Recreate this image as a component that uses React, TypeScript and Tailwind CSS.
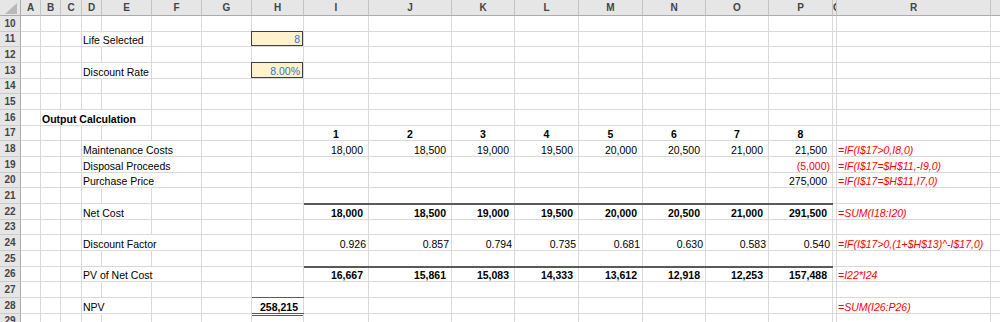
import React from 'react';

type Cell = { t: string; c: string; ov?: 'input' | 'thick' | 'npv' };
type Row = { n: number; h: string; cells?: Record<string, Cell>; hide?: string[] };

const COLS: { k: string; w: string; hc?: string }[] = [
  { k: 'A', w: 'w-[20px]' },
  { k: 'B', w: 'w-[20px]' },
  { k: 'C', w: 'w-[21px]' },
  { k: 'D', w: 'w-[20px]' },
  { k: 'E', w: 'w-[50px]' },
  { k: 'F', w: 'w-[50px]' },
  { k: 'G', w: 'w-[50px]' },
  { k: 'H', w: 'w-[52px]' },
  { k: 'I', w: 'w-[65px]' },
  { k: 'J', w: 'w-[83px]' },
  { k: 'K', w: 'w-[63px]' },
  { k: 'L', w: 'w-[64px]' },
  { k: 'M', w: 'w-[64px]' },
  { k: 'N', w: 'w-[63px]' },
  { k: 'O', w: 'w-[63px]' },
  { k: 'P', w: 'w-[64px]' },
  { k: 'Q', w: 'w-[4px]', hc: 'justify-start' },
  { k: 'R', w: 'w-[154px]' },
  { k: 'S', w: 'w-[64px]' },
];

const LB = 'justify-start pl-[1px]';
const NUM = 'justify-end pr-[5px]';
const NUMB = 'justify-end pr-[5px] font-bold';
const FAC = 'justify-end pr-[2px]';
const FX = 'justify-start pl-[1px] italic text-[#ff0000]';
const HD = 'justify-center font-bold';
const INP = 'justify-end pr-[2px] text-[#4472c4]';

const series = (vals: string[], c: string, ov?: Cell['ov']): Record<string, Cell> => {
  const keys = ['I', 'J', 'K', 'L', 'M', 'N', 'O', 'P'];
  const out: Record<string, Cell> = {};
  vals.forEach((v, i) => {
    if (v) out[keys[i]] = { t: v, c, ov };
  });
  return out;
};

const ROWS: Row[] = [
  { n: 10, h: 'h-[16px]' },
  {
    n: 11,
    h: 'h-[15px]',
    cells: { D: { t: 'Life Selected', c: LB }, H: { t: '8', c: INP, ov: 'input' } },
    hide: ['D'],
  },
  { n: 12, h: 'h-[16px]' },
  {
    n: 13,
    h: 'h-[16px]',
    cells: { D: { t: 'Discount Rate', c: LB }, H: { t: '8.00%', c: INP, ov: 'input' } },
    hide: ['D'],
  },
  { n: 14, h: 'h-[15px]' },
  { n: 15, h: 'h-[16px]' },
  {
    n: 16,
    h: 'h-[16px]',
    cells: { B: { t: 'Output Calculation', c: LB + ' font-bold' } },
    hide: ['B', 'C', 'D'],
  },
  { n: 17, h: 'h-[15px]', cells: series(['1', '2', '3', '4', '5', '6', '7', '8'], HD) },
  {
    n: 18,
    h: 'h-[16px]',
    cells: {
      D: { t: 'Maintenance Costs', c: LB },
      ...series(['18,000', '18,500', '19,000', '19,500', '20,000', '20,500', '21,000', '21,500'], NUM),
      R: { t: '=IF(I$17>0,I8,0)', c: FX },
    },
    hide: ['D', 'E'],
  },
  {
    n: 19,
    h: 'h-[16px]',
    cells: {
      D: { t: 'Disposal Proceeds', c: LB },
      P: { t: '(5,000)', c: 'justify-end pr-[2px] text-[#ff0000]' },
      R: { t: '=IF(I$17=$H$11,-I9,0)', c: FX },
    },
    hide: ['D', 'E'],
  },
  {
    n: 20,
    h: 'h-[15px]',
    cells: {
      D: { t: 'Purchase Price', c: LB },
      P: { t: '275,000', c: NUM },
      R: { t: '=IF(I$17=$H$11,I7,0)', c: FX },
    },
    hide: ['D', 'E'],
  },
  { n: 21, h: 'h-[16px]' },
  {
    n: 22,
    h: 'h-[16px]',
    cells: {
      D: { t: 'Net Cost', c: LB },
      ...series(['18,000', '18,500', '19,000', '19,500', '20,000', '20,500', '21,000', '291,500'], NUMB, 'thick'),
      R: { t: '=SUM(I18:I20)', c: FX },
    },
    hide: ['D'],
  },
  { n: 23, h: 'h-[15px]' },
  {
    n: 24,
    h: 'h-[16px]',
    cells: {
      D: { t: 'Discount Factor', c: LB },
      ...series(['0.926', '0.857', '0.794', '0.735', '0.681', '0.630', '0.583', '0.540'], FAC),
      R: { t: '=IF(I$17>0,(1+$H$13)^-I$17,0)', c: FX },
    },
    hide: ['D', 'E'],
  },
  { n: 25, h: 'h-[16px]' },
  {
    n: 26,
    h: 'h-[15px]',
    cells: {
      D: { t: 'PV of Net Cost', c: LB },
      ...series(['16,667', '15,861', '15,083', '14,333', '13,612', '12,918', '12,253', '157,488'], NUMB, 'thick'),
      R: { t: '=I22*I24', c: FX },
    },
    hide: ['D', 'E'],
  },
  { n: 27, h: 'h-[16px]' },
  {
    n: 28,
    h: 'h-[16px]',
    cells: {
      D: { t: 'NPV', c: LB },
      H: { t: '258,215', c: NUMB, ov: 'npv' },
      R: { t: '=SUM(I26:P26)', c: FX },
    },
    hide: ['D'],
  },
  { n: 29, h: 'h-[15px]' },
];

function DataCell({ col, row }: { col: { k: string; w: string }; row: Row }) {
  const cell = row.cells?.[col.k];
  const hidden = row.hide?.includes(col.k);
  return (
    <div
      className={`relative shrink-0 flex items-end whitespace-nowrap border-b border-r border-b-[#d9d9d9] ${
        hidden ? 'border-r-transparent' : 'border-r-[#d9d9d9]'
      } ${col.w} ${cell && cell.ov !== 'input' ? cell.c : ''}`}
    >
      {cell && cell.ov === 'input' ? (
        <div
          className={`absolute -left-px -top-px right-0 bottom-0 flex items-end border border-[#3f3f3f] bg-[#fff2cc] ${cell.c}`}
        >
          <span>{cell.t}</span>
        </div>
      ) : cell ? (
        <span>{cell.t}</span>
      ) : null}
      {cell && cell.ov === 'thick' ? (
        <div className="absolute left-0 -right-px -top-px h-[2px] bg-[#595959]" />
      ) : null}
      {cell && cell.ov === 'npv' ? (
        <>
          <div className="absolute left-0 -right-px -top-px h-px bg-[#595959]" />
          <div className="absolute left-0 -right-px -bottom-[3px] h-[3px] border-t-[3px] border-double border-t-[#595959]" />
        </>
      ) : null}
    </div>
  );
}

export default function App() {
  return (
    <div className="w-[1000px] h-[322px] overflow-hidden bg-white font-['Liberation_Sans',Arial,sans-serif] text-[10.5px] leading-[12px] text-black">
      {/* column header */}
      <div className="flex h-[16px]">
        <div className="relative shrink-0 w-[21px] h-[16px] bg-[#e6e6e6] border-r border-b border-r-[#ababab] border-b-[#ababab]">
          <svg className="absolute left-0 top-0" width="20" height="15" viewBox="0 0 20 15">
            <polygon points="5,14 17,14 17,3" fill="#b9b9b9" />
          </svg>
        </div>
        {COLS.map((c) => (
          <div
            key={c.k}
            className={`shrink-0 flex items-center overflow-hidden pt-[1px] bg-[#e6e6e6] border-r border-b border-r-[#c3c3c3] border-b-[#ababab] text-[#444444] font-bold text-[10px] ${
              c.hc ?? 'justify-center'
            } ${c.w}`}
          >
            {c.k}
          </div>
        ))}
      </div>
      {/* rows */}
      {ROWS.map((r) => (
        <div key={r.n} className={`flex ${r.h}`}>
          <div className="shrink-0 w-[21px] flex items-center justify-center bg-[#e6e6e6] border-r border-b border-r-[#ababab] border-b-[#cbcbcb] text-[#444444] font-bold text-[10px]">
            {r.n}
          </div>
          {COLS.map((c) => (
            <DataCell key={c.k} col={c} row={r} />
          ))}
        </div>
      ))}
    </div>
  );
}
